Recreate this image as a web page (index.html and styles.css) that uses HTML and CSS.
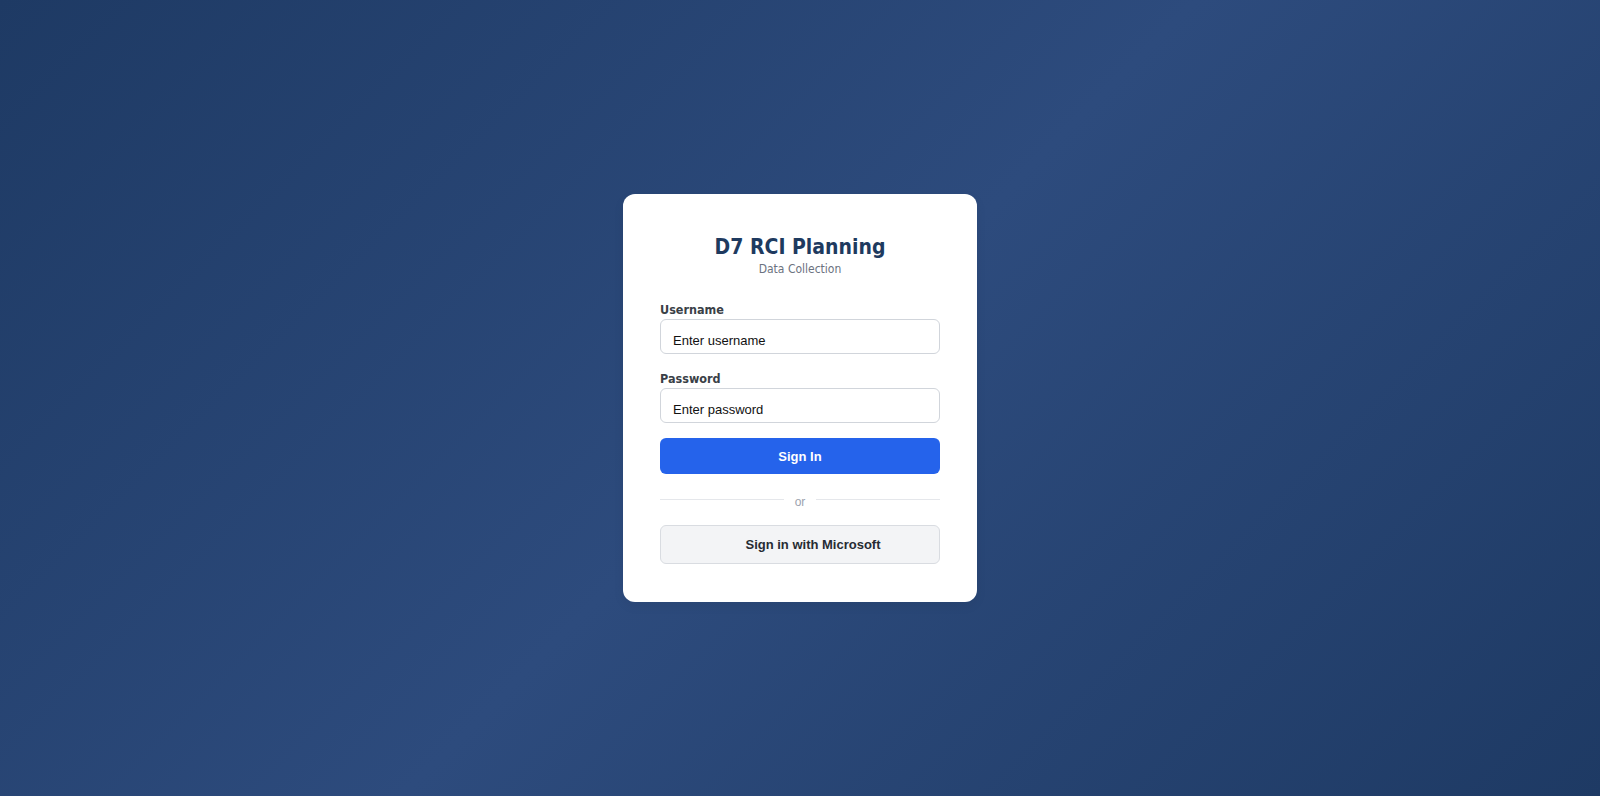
FILE: index.html
```html
<!DOCTYPE html>
<html>
<head>
    <meta charset="UTF-8">
    <title>D7 RCI Planning - Sign In</title>
    <link rel="stylesheet" href="styles.css">
</head>
<body>
<div class="loginPage">
    <form class="loginCard" action="" method="post" onsubmit="return false">
        <!-- 标题 -->
        <div class="loginHeader">
            <h1 class="loginTitle">D7 RCI Planning</h1>
            <p class="loginSub">Data Collection</p>
        </div>

        <div class="loginField">
            <label class="loginLabel" for="username">Username</label>
            <input class="loginText" id="username" name="username" type="text" placeholder="Enter username">
        </div>
        <div class="loginField">
            <label class="loginLabel" for="password">Password</label>
            <input class="loginText" id="password" name="password" type="password" placeholder="Enter password">
        </div>

        <button class="loginButton" type="submit">Sign In</button>

        <div class="loginDivider"><span>or</span></div>

        <button class="msButton" type="button">
            <span class="msIcon"></span>
            <span>Sign in with Microsoft</span>
        </button>
    </form>
</div>
</body>
</html>
```

FILE: styles.css
```css
/*page*/
html, body {
    margin: 0;
    padding: 0;
}

body {
    background: linear-gradient(135deg, #1e3a64 0%, #2d4b7d 50%, #1e3a64 100%);
    font-family: "DejaVu Sans Condensed", "DejaVu Sans", sans-serif;
}

.loginPage {
    min-height: 100vh;
    display: flex;
    align-items: center;
    justify-content: center;
}

/*card*/
.loginCard {
    width: 280px;
    padding: 40px 37px 38px 37px;
    background: #ffffff;
    border-radius: 12px;
    box-shadow: 0 4px 12px rgba(0, 0, 0, 0.06);
    display: flex;
    flex-direction: column;
}

.loginHeader {
    text-align: center;
    margin-bottom: 24px;
}

.loginTitle {
    margin: 0;
    color: #1e3a5f;
    font-size: 21px;
    line-height: 26px;
    font-weight: bold;
}

.loginSub {
    margin: 1px 0 0 0;
    color: #6b7280;
    font-size: 12px;
    line-height: 16px;
}

/*fields*/
.loginField {
    display: flex;
    flex-direction: column;
}

.loginField + .loginField {
    margin-top: 16px;
}

.loginLabel {
    color: #3a3f47;
    font-size: 12.5px;
    line-height: 16px;
    font-weight: bold;
    padding-top: 1px;
    margin-bottom: 1px;
}

.loginText {
    box-sizing: border-box;
    width: 100%;
    height: 35px;
    margin: 0;
    padding: 18px 12px 10px 12px;
    border: 1px solid #d1d5db;
    border-radius: 6px;
    font-family: "Liberation Sans", Arial, sans-serif;
    font-size: 13px;
    color: #111111;
    background: #ffffff;
    outline: none;
}

.loginText::placeholder {
    color: #111111;
    opacity: 1;
}

/*buttons*/
.loginButton {
    margin-top: 15px;
    height: 36px;
    border: none;
    border-radius: 6px;
    background: #2563eb;
    color: #ffffff;
    font: bold 13px "Liberation Sans", Arial, sans-serif;
    cursor: pointer;
}

.loginDivider {
    margin: 17px 0 18px 0;
    height: 16px;
    display: flex;
    align-items: center;
    color: #9ca3af;
    font: 12px "Liberation Sans", Arial, sans-serif;
}

.loginDivider::before,
.loginDivider::after {
    content: "";
    flex: 1;
    height: 1px;
    background: #e5e7eb;
}

.loginDivider span {
    padding: 6px 11px 0 11px;
}

.msButton {
    height: 39px;
    border: 1px solid #d9dce1;
    border-radius: 6px;
    background: #f3f4f6;
    color: #262b33;
    font: bold 13px "Liberation Sans", Arial, sans-serif;
    display: flex;
    align-items: center;
    justify-content: center;
    gap: 8px;
    cursor: pointer;
}

.msIcon {
    width: 18px;
    height: 18px;
}
```
